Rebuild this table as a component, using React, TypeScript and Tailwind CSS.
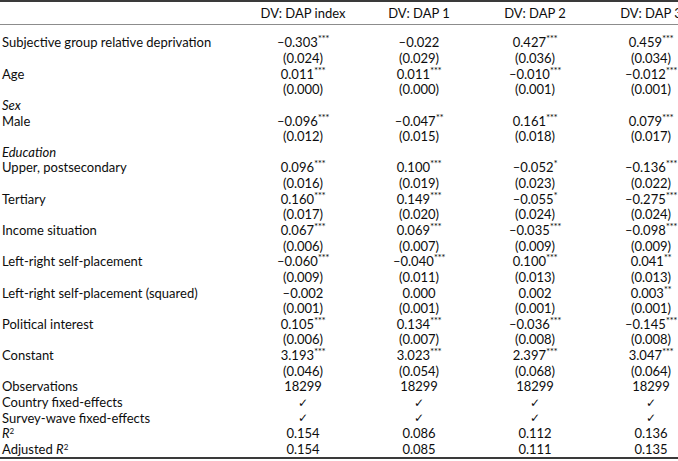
type Cell = { v: string; s?: string };

type Row = { label: React.ReactNode; cells?: Cell[] };

const c = (v: string, s?: string): Cell => ({ v, s });

const se = (a: string, b: string, d: string, e: string): Row => ({
  label: '',
  cells: [c(a), c(b), c(d), c(e)],
});

const R2 = () => (
  <>
    <i>R</i>
    <sup className="text-[8px]">2</sup>
  </>
);

const rows: Row[] = [
  {
    label: 'Subjective group relative deprivation',
    cells: [c('–0.303', '***'), c('–0.022'), c('0.427', '***'), c('0.459', '***')],
  },
  se('(0.024)', '(0.029)', '(0.036)', '(0.034)'),
  {
    label: 'Age',
    cells: [c('0.011', '***'), c('0.011', '***'), c('–0.010', '***'), c('–0.012', '***')],
  },
  se('(0.000)', '(0.000)', '(0.001)', '(0.001)'),
  { label: <i>Sex</i> },
  {
    label: 'Male',
    cells: [c('–0.096', '***'), c('–0.047', '**'), c('0.161', '***'), c('0.079', '***')],
  },
  se('(0.012)', '(0.015)', '(0.018)', '(0.017)'),
  { label: <i>Education</i> },
  {
    label: 'Upper, postsecondary',
    cells: [c('0.096', '***'), c('0.100', '***'), c('–0.052', '*'), c('–0.136', '***')],
  },
  se('(0.016)', '(0.019)', '(0.023)', '(0.022)'),
  {
    label: 'Tertiary',
    cells: [c('0.160', '***'), c('0.149', '***'), c('–0.055', '*'), c('–0.275', '***')],
  },
  se('(0.017)', '(0.020)', '(0.024)', '(0.024)'),
  {
    label: 'Income situation',
    cells: [c('0.067', '***'), c('0.069', '***'), c('–0.035', '***'), c('–0.098', '***')],
  },
  se('(0.006)', '(0.007)', '(0.009)', '(0.009)'),
  {
    label: 'Left-right self-placement',
    cells: [c('–0.060', '***'), c('–0.040', '***'), c('0.100', '***'), c('0.041', '**')],
  },
  se('(0.009)', '(0.011)', '(0.013)', '(0.013)'),
  {
    label: 'Left-right self-placement (squared)',
    cells: [c('–0.002'), c('0.000'), c('0.002'), c('0.003', '**')],
  },
  se('(0.001)', '(0.001)', '(0.001)', '(0.001)'),
  {
    label: 'Political interest',
    cells: [c('0.105', '***'), c('0.134', '***'), c('–0.036', '***'), c('–0.145', '***')],
  },
  se('(0.006)', '(0.007)', '(0.008)', '(0.008)'),
  {
    label: 'Constant',
    cells: [c('3.193', '***'), c('3.023', '***'), c('2.397', '***'), c('3.047', '***')],
  },
  se('(0.046)', '(0.054)', '(0.068)', '(0.064)'),
  { label: 'Observations', cells: [c('18299'), c('18299'), c('18299'), c('18299')] },
  { label: 'Country fixed-effects', cells: [c('✓'), c('✓'), c('✓'), c('✓')] },
  { label: 'Survey-wave fixed-effects', cells: [c('✓'), c('✓'), c('✓'), c('✓')] },
  { label: <R2 />, cells: [c('0.154'), c('0.086'), c('0.112'), c('0.136')] },
  {
    label: (
      <>
        Adjusted <R2 />
      </>
    ),
    cells: [c('0.154'), c('0.085'), c('0.111'), c('0.135')],
  },
];

const headers = ['DV: DAP index', 'DV: DAP 1', 'DV: DAP 2', 'DV: DAP 3'];

const grid = 'grid grid-cols-[245px_116px_116px_116px_116px]';

export default function App() {
  return (
    <div className="h-[461px] w-[678px] overflow-hidden bg-white font-['Lato',sans-serif] text-[13px] text-[#0d0d0d]">
      <div className="w-[709px] border-t-2 border-[#3a3a3a]">
        <div className={`${grid} h-[23px] items-center border-b border-[#8c8c8c] pt-[2px]`}>
          <div />
          {headers.map((h) => (
            <div key={h} className="text-center">
              {h}
            </div>
          ))}
        </div>
        <div className="border-b-2 border-[#3a3a3a] pt-[10px]">
          {rows.map((row, i) => (
            <div key={i} className={`${grid} h-[15.65px] items-center leading-none`}>
              <div className="pl-[2px] whitespace-nowrap">{row.label}</div>
              {row.cells?.map((cell, j) =>
                cell.v === '✓' ? (
                  <div key={j} className="text-center font-['DejaVu_Sans',sans-serif] text-[12px] font-bold">
                    ✓
                  </div>
                ) : (
                  <div key={j} className="text-center whitespace-nowrap">
                    {cell.v}
                    {cell.s && (
                      <sup className="text-[10px] tracking-[-0.5px]">{cell.s}</sup>
                    )}
                  </div>
                ),
              )}
            </div>
          ))}
        </div>
      </div>
    </div>
  );
}
